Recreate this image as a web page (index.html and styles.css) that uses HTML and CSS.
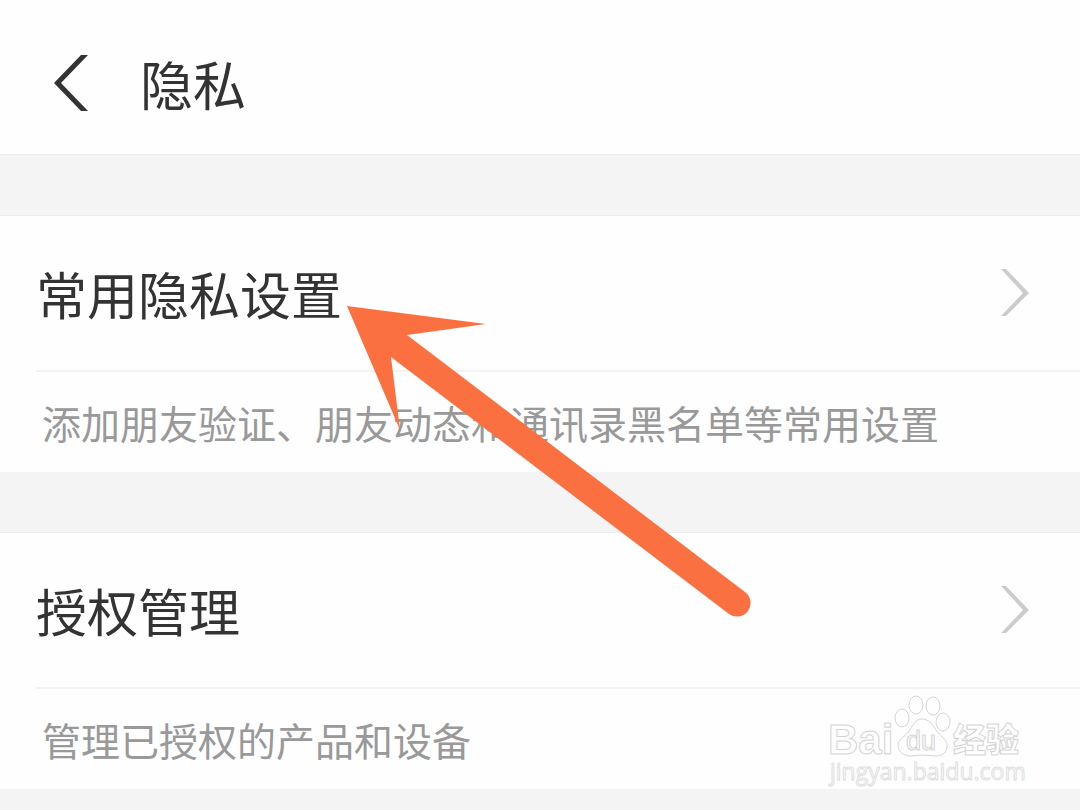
FILE: index.html
```html
<!DOCTYPE html>
<html lang="zh-CN">
<head>
<meta charset="utf-8">
<meta name="viewport" content="width=device-width, initial-scale=1">
<title>隐私</title>
<link rel="stylesheet" href="styles.css">
</head>
<body>
<header class="topbar">
  <button class="back" type="button" aria-label="返回">
    <svg width="36" height="58" viewBox="0 0 36 58" aria-hidden="true"><path d="M27 1H34L7 29L34 57H27L0 29Z" fill="#333"/></svg>
  </button>
  <h1 class="title">隐私</h1>
</header>
<main class="settings">
  <section class="group">
    <a class="row" href="#common">
      <span>常用隐私设置</span>
      <svg width="30" height="50" viewBox="0 0 30 50" aria-hidden="true"><path d="M1 1H6L29 25L6 48H1L23 25Z" fill="#ccc"/></svg>
    </a>
    <p class="note">添加朋友验证、朋友动态和通讯录黑名单等常用设置</p>
    <svg class="arrow" width="410" height="316" viewBox="0 0 410 316" aria-hidden="true"><path d="M0 0L139 18L60 29L398 286A13 13 0 0 1 382 308L44 51L53 124Z" fill="#fb7041"/></svg>
  </section>
  <section class="group">
    <a class="row" href="#authorization">
      <span>授权管理</span>
      <svg width="30" height="50" viewBox="0 0 30 50" aria-hidden="true"><path d="M1 1H6L29 25L6 48H1L23 25Z" fill="#ccc"/></svg>
    </a>
    <p class="note">管理已授权的产品和设备</p>
    <svg class="watermark" width="200" height="96" viewBox="0 0 200 96" role="img" aria-label="Baidu 经验 jingyan.baidu.com">
      <g class="outline">
        <text x="0" y="61" font-size="42">Bai</text>
        <ellipse cx="74" cy="25" rx="7" ry="9"/>
        <ellipse cx="88" cy="12" rx="7" ry="9"/>
        <ellipse cx="105" cy="13" rx="7" ry="9"/>
        <ellipse cx="115" cy="29" rx="7" ry="9"/>
        <path d="M94 26C101 26 105 32 108 37C112 43 119 46 119 53C119 60 114 63 108 63C103 63 99 62 94 62C90 62 86 63 82 63C74 62 70 58 70 52C71 45 78 43 82 37C85 31 88 26 94 26Z"/>
        <text x="78" y="57" font-size="27" class="inner">du</text>
        <text x="125" y="59" font-size="33" class="cjk">经验</text>
        <text x="2" y="87" font-size="23" class="site">jingyan.baidu.com</text>
      </g>
    </svg>
  </section>
</main>
</body>
</html>
```
FILE: styles.css
```css
* { box-sizing: border-box; }

body {
  margin: 0;
  min-height: 100vh;
  background: #f4f4f4;
  color: #333;
  font-family: "Noto Sans CJK SC", sans-serif;
}

.topbar {
  display: flex;
  align-items: center;
  gap: 50px;
  padding: 38px 54px 26px;
  background: #fefefe;
  border-bottom: 1px solid #ececec;
}

.back {
  display: flex;
  padding: 0;
  border: 0;
  background: none;
}

.title {
  margin: 0;
  font-size: 53px;
  font-weight: 400;
  line-height: 90px;
}

.settings {
  display: flex;
  flex-direction: column;
  gap: 60px;
  padding: 60px 0 20px;
}

.group {
  position: relative;
  background: #fefefe;
  border-top: 1px solid #ececec;
}

.row {
  display: flex;
  align-items: center;
  justify-content: space-between;
  margin-left: 36px;
  padding: 32px 50px 32px 0;
  border-bottom: 2px solid #f3f3f3;
  color: inherit;
  font-size: 51px;
  line-height: 90px;
  text-decoration: none;
}

.note {
  margin: 0;
  padding: 20px 42px;
  color: #999;
  font-size: 39px;
  line-height: 60px;
}

.arrow {
  position: absolute;
  top: 90px;
  left: 347px;
  z-index: 1;
}

.watermark {
  position: absolute;
  right: 52px;
  bottom: 0;
}

.outline {
  fill: #fefefe;
  stroke: #d4d4d4;
  stroke-width: 1;
  stroke-linejoin: round;
  font-family: "Liberation Sans", sans-serif;
  font-weight: 700;
}

.outline .inner {
  font-weight: 400;
}

.outline .cjk {
  font-family: "Noto Sans CJK SC", sans-serif;
  font-weight: 900;
}

.outline .site {
  stroke: #dedede;
  font-family: "Open Sans", sans-serif;
  font-weight: 400;
}
```
